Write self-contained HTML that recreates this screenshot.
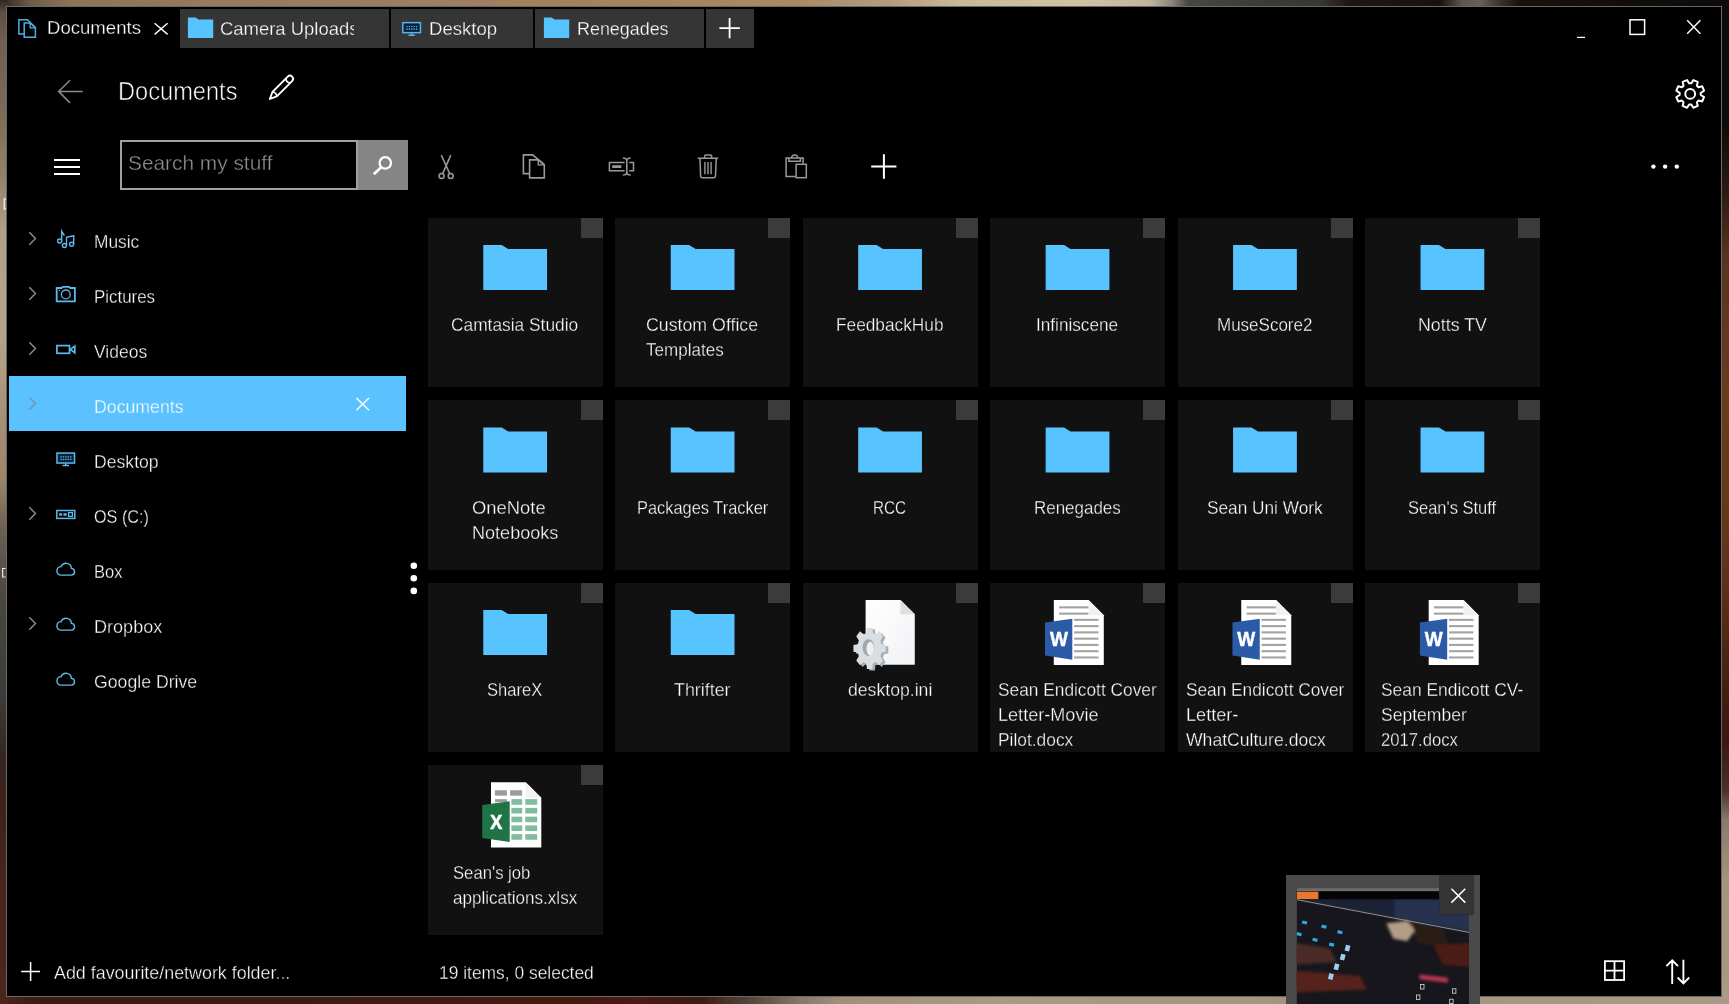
<!DOCTYPE html>
<html lang="en">
<head>
<meta charset="utf-8">
<title>Documents</title>
<style>
*{box-sizing:border-box;margin:0;padding:0}
html,body{width:1729px;height:1004px;overflow:hidden;background:#000}
body{position:relative;font-family:"Liberation Sans",sans-serif;color:#fff;-webkit-font-smoothing:antialiased}
.abs{position:absolute}
/* desktop photo peeking round the window */
#bgT{left:0;top:0;width:1729px;height:8px;background:linear-gradient(90deg,#2e2620 0,#4a3d32 14px,#6d5b49 30px,#8c7359 70px,#97795b 200px,#9c7f60 430px,#a3845f 640px,#a98a68 800px,#b39c7d 890px,#c9b999 960px,#d0c3a6 1080px,#c2b59b 1150px,#8a847c 1172px,#4a4644 1188px,#3e3a38 1260px,#3a3634 1320px,#1c1714 1350px,#171210 1440px,#5e554d 1462px,#6a6058 1480px,#3a322c 1500px,#17110e 1520px,#0d0a09 1729px)}
#bgB{left:0;top:996px;width:1729px;height:8px;background:linear-gradient(90deg,#4a261c 0,#3a1a12 40px,#3c1a12 300px,#42190f 560px,#4a1a14 640px,#3a1a14 700px,#54453c 750px,#86786a 800px,#a08f7c 840px,#a89a84 1000px,#a3947e 1300px,#a89a86 1729px)}
#bgL{left:0;top:0;width:8px;height:1004px;background:linear-gradient(180deg,#2e2620 0,#5a4e44 12px,#705f50 40px,#7d6c5a 120px,#94846e 180px,#b0a08a 230px,#b5a48c 330px,#a8947a 400px,#9a856b 480px,#6a5f54 530px,#4a4642 600px,#3c3a38 700px,#35241f 760px,#40221a 820px,#48261c 900px,#4a261c 1004px)}
#bgR{left:1721px;top:0;width:8px;height:1004px;background:linear-gradient(180deg,#0d0a09 0,#0d0a09 120px,#2a1a12 190px,#5a3420 260px,#6a3c1e 400px,#62351a 560px,#4a2412 660px,#3a1810 740px,#4a3028 790px,#8a7a6a 820px,#a39480 880px,#a89a86 1004px)}
.t{position:absolute;white-space:nowrap;line-height:1}
#win{left:6px;top:6px;width:1716px;height:991px;background:#000;border:1px solid #6b6862}
</style>
</head>
<body>
<div id="bgT" class="abs"></div>
<div id="bgB" class="abs"></div>
<div id="bgL" class="abs"></div>
<div id="bgR" class="abs"></div>
<div id="win" class="abs"></div>
<div class="abs" style="left:179.50px;top:9.40px;width:209.50px;height:38.20px;background:#353535;"></div>
<div class="abs" style="left:391.20px;top:9.40px;width:141.60px;height:38.20px;background:#353535;"></div>
<div class="abs" style="left:535.10px;top:9.40px;width:169.00px;height:38.20px;background:#353535;"></div>
<div class="abs" style="left:706.40px;top:9.40px;width:47.40px;height:38.20px;background:#353535;"></div>
<div class="abs" style="left:53.80px;top:158.70px;width:26.00px;height:2.00px;background:#fff;"></div><div class="abs" style="left:53.80px;top:165.80px;width:26.00px;height:2.00px;background:#fff;"></div><div class="abs" style="left:53.80px;top:173.00px;width:26.00px;height:2.00px;background:#fff;"></div>
<div class="abs" style="left:120.20px;top:140.20px;width:238.00px;height:49.60px;background:#000;border:2px solid #a0a0a0"></div>
<div class="abs" style="left:357.60px;top:140.20px;width:50.50px;height:49.60px;background:#858585;"></div>
<div class="abs" style="left:8.60px;top:376.20px;width:397.30px;height:54.40px;background:#5bc2ff;"></div>
<div class="abs" style="left:428.00px;top:217.75px;width:174.80px;height:169.60px;background:#111111;"></div>
<div class="abs" style="left:580.80px;top:217.75px;width:22.00px;height:20.20px;background:#3b3b3b;"></div>
<div class="abs" style="left:615.45px;top:217.75px;width:174.80px;height:169.60px;background:#111111;"></div>
<div class="abs" style="left:768.25px;top:217.75px;width:22.00px;height:20.20px;background:#3b3b3b;"></div>
<div class="abs" style="left:802.90px;top:217.75px;width:174.80px;height:169.60px;background:#111111;"></div>
<div class="abs" style="left:955.70px;top:217.75px;width:22.00px;height:20.20px;background:#3b3b3b;"></div>
<div class="abs" style="left:990.35px;top:217.75px;width:174.80px;height:169.60px;background:#111111;"></div>
<div class="abs" style="left:1143.15px;top:217.75px;width:22.00px;height:20.20px;background:#3b3b3b;"></div>
<div class="abs" style="left:1177.80px;top:217.75px;width:174.80px;height:169.60px;background:#111111;"></div>
<div class="abs" style="left:1330.60px;top:217.75px;width:22.00px;height:20.20px;background:#3b3b3b;"></div>
<div class="abs" style="left:1365.25px;top:217.75px;width:174.80px;height:169.60px;background:#111111;"></div>
<div class="abs" style="left:1518.05px;top:217.75px;width:22.00px;height:20.20px;background:#3b3b3b;"></div>
<div class="abs" style="left:428.00px;top:400.25px;width:174.80px;height:169.60px;background:#111111;"></div>
<div class="abs" style="left:580.80px;top:400.25px;width:22.00px;height:20.20px;background:#3b3b3b;"></div>
<div class="abs" style="left:615.45px;top:400.25px;width:174.80px;height:169.60px;background:#111111;"></div>
<div class="abs" style="left:768.25px;top:400.25px;width:22.00px;height:20.20px;background:#3b3b3b;"></div>
<div class="abs" style="left:802.90px;top:400.25px;width:174.80px;height:169.60px;background:#111111;"></div>
<div class="abs" style="left:955.70px;top:400.25px;width:22.00px;height:20.20px;background:#3b3b3b;"></div>
<div class="abs" style="left:990.35px;top:400.25px;width:174.80px;height:169.60px;background:#111111;"></div>
<div class="abs" style="left:1143.15px;top:400.25px;width:22.00px;height:20.20px;background:#3b3b3b;"></div>
<div class="abs" style="left:1177.80px;top:400.25px;width:174.80px;height:169.60px;background:#111111;"></div>
<div class="abs" style="left:1330.60px;top:400.25px;width:22.00px;height:20.20px;background:#3b3b3b;"></div>
<div class="abs" style="left:1365.25px;top:400.25px;width:174.80px;height:169.60px;background:#111111;"></div>
<div class="abs" style="left:1518.05px;top:400.25px;width:22.00px;height:20.20px;background:#3b3b3b;"></div>
<div class="abs" style="left:428.00px;top:582.75px;width:174.80px;height:169.60px;background:#111111;"></div>
<div class="abs" style="left:580.80px;top:582.75px;width:22.00px;height:20.20px;background:#3b3b3b;"></div>
<div class="abs" style="left:615.45px;top:582.75px;width:174.80px;height:169.60px;background:#111111;"></div>
<div class="abs" style="left:768.25px;top:582.75px;width:22.00px;height:20.20px;background:#3b3b3b;"></div>
<div class="abs" style="left:802.90px;top:582.75px;width:174.80px;height:169.60px;background:#111111;"></div>
<div class="abs" style="left:955.70px;top:582.75px;width:22.00px;height:20.20px;background:#3b3b3b;"></div>
<div class="abs" style="left:990.35px;top:582.75px;width:174.80px;height:169.60px;background:#111111;"></div>
<div class="abs" style="left:1143.15px;top:582.75px;width:22.00px;height:20.20px;background:#3b3b3b;"></div>
<div class="abs" style="left:1177.80px;top:582.75px;width:174.80px;height:169.60px;background:#111111;"></div>
<div class="abs" style="left:1330.60px;top:582.75px;width:22.00px;height:20.20px;background:#3b3b3b;"></div>
<div class="abs" style="left:1365.25px;top:582.75px;width:174.80px;height:169.60px;background:#111111;"></div>
<div class="abs" style="left:1518.05px;top:582.75px;width:22.00px;height:20.20px;background:#3b3b3b;"></div>
<div class="abs" style="left:428.00px;top:765.25px;width:174.80px;height:169.60px;background:#111111;"></div>
<div class="abs" style="left:580.80px;top:765.25px;width:22.00px;height:20.20px;background:#3b3b3b;"></div>
<div class="abs" style="left:1286.40px;top:875.00px;width:193.50px;height:129.00px;background:#4a4a4a;"></div>
<div class="abs" style="left:1439.20px;top:875.00px;width:35.20px;height:39.60px;background:#343434;"></div>
<svg class="abs" style="left:0;top:0;will-change:transform" width="1729" height="1004" viewBox="0 0 1729 1004">
<g fill="none" stroke="#4fb0e2" stroke-width="1.5"><path d="M24.2 33.9H18.9V19.7H27.4L35.4 27.6"/><path d="M24.2 22.9H30.2L35.4 27.8V37.3H24.2Z"/><path d="M30.2 22.9V27.8H35.4" stroke-width="1.3"/></g>
<path d="M154.6 23.2L167.6 34.4M167.6 23.2L154.6 34.4" stroke="#fff" stroke-width="1.4" fill="none"/>
<path d="M187.90 17.60h7.8l2.8 1.9h14.7v18.5h-25.3z" fill="#58c4ff"/>
<g fill="none" stroke="#55b4e8" stroke-width="1.5"><rect x="402.85" y="22.65" width="17.6" height="10" fill="#06213a"/><path d="M411.65 33.10v2M408.45 35.20h6.4"/><path d="M406.30 26.50h11" stroke-dasharray="1.4 1" stroke-width="1.2"/><path d="M406.30 29.00h11" stroke-dasharray="1.4 1" stroke-width="1.4"/></g>
<path d="M543.90 17.60h7.8l2.8 1.9h14.7v18.5h-25.3z" fill="#58c4ff"/>
<path d="M719.4 28.1H739.8M729.6 18V38.2" stroke="#fff" stroke-width="1.8" fill="none"/>
<path d="M1577 37.4H1585" stroke="#fff" stroke-width="1.3"/>
<rect x="1630" y="19.8" width="14.6" height="14.6" fill="none" stroke="#fff" stroke-width="1.5"/>
<path d="M1687.2 20.2L1700.4 33.8M1700.4 20.2L1687.2 33.8" stroke="#fff" stroke-width="1.4" fill="none"/>
<path d="M82.7 91.4H58.2M70 80.3L58.6 91.4L70 102.9" stroke="#8a8a8a" stroke-width="1.5" fill="none"/>
<g transform="translate(269.4,99.4) rotate(-45)" fill="none" stroke="#fff" stroke-width="1.9" stroke-linejoin="round"><path d="M0.6 0L7.4 -3.1H29A3.1 3.1 0 0 1 29 3.1H7.4Z"/><path d="M7.4 -3.1A5 5 0 0 1 7.4 3.1M26.3 -3.1A5 5 0 0 0 26.3 3.1" stroke-width="1.6"/></g>
<g fill="none" stroke="#fff" stroke-width="2" stroke-linejoin="round"><path d="M1700.36 90.86L1704.20 91.52L1704.20 96.28L1700.36 96.94L1699.53 98.93L1701.78 102.12L1698.42 105.48L1695.23 103.23L1693.24 104.06L1692.58 107.90L1687.82 107.90L1687.16 104.06L1685.17 103.23L1681.98 105.48L1678.62 102.12L1680.87 98.93L1680.04 96.94L1676.20 96.28L1676.20 91.52L1680.04 90.86L1680.87 88.87L1678.62 85.68L1681.98 82.32L1685.17 84.57L1687.16 83.74L1687.82 79.90L1692.58 79.90L1693.24 83.74L1695.23 84.57L1698.42 82.32L1701.78 85.68L1699.53 88.87Z" transform="rotate(22.5 1690.2 93.9)"/><circle cx="1690.2" cy="93.9" r="4.9"/></g>
<g fill="none" stroke="#fff" stroke-width="2.2"><circle cx="385.3" cy="162.9" r="5.7"/><path d="M381.2 167.2L373.8 174.3" stroke-width="2.6"/></g>
<g fill="none" stroke="#9a9a9a" stroke-width="1.5"><path d="M441.3 155.1L449.6 173.4M450.8 155.1L442.8 173.4"/><circle cx="441.6" cy="175.9" r="2.5"/><circle cx="450.7" cy="175.9" r="2.5"/></g>
<g fill="none" stroke="#9a9a9a" stroke-width="1.6"><path d="M529.6 173.6H523.4V154.9H532.6L544.3 164.6"/><path d="M529.6 159.9H538.3L544.3 164.9V177.9H529.6Z"/><path d="M538.3 159.9V164.9H544.3" stroke-width="1.4"/></g>
<g fill="none" stroke="#9a9a9a" stroke-width="1.5"><path d="M624.6 162.6H609.4V170.7H624.6M629.2 162.6H633.5V170.7H629.2"/><path d="M612.2 166.6H621.3" stroke-width="2.8"/><path d="M622.9 157.9C625.8 157.9 626.8 159 626.8 161V172C626.8 174 625.8 175.1 622.9 175.1M630.7 157.9C627.8 157.9 626.8 159 626.8 161M626.8 172C626.8 174 627.8 175.1 630.7 175.1"/></g>
<g fill="none" stroke="#9a9a9a" stroke-width="1.5"><path d="M697.8 158.2H718.1M704.6 158.2V156.4Q704.6 155 706 155H710.3Q711.7 155 711.7 156.4V158.2"/><path d="M700 158.2L700.6 176Q700.7 177.8 702.5 177.8H713.6Q715.4 177.8 715.5 176L716.3 158.2"/><path d="M704.9 162V174.2M708 162V174.2M711.1 162V174.2" stroke-width="1.4"/></g>
<g fill="none" stroke="#9a9a9a" stroke-width="1.5"><path d="M795.6 176.6H786.1V158H803.1V163.8"/><path d="M788.9 158V161.3H800.4V158M791.6 158A3.1 3.1 0 0 1 797.8 158"/><rect x="796.1" y="164.3" width="10.2" height="13.4"/></g>
<path d="M871.2 166.5H896.4M883.9 154.2V178.7" stroke="#fff" stroke-width="2" fill="none"/>
<g fill="#fff"><circle cx="1653.4" cy="166.6" r="2.2"/><circle cx="1665.1" cy="166.6" r="2.2"/><circle cx="1676.8" cy="166.6" r="2.2"/></g>
<path d="M29.3 232.30L35.5 238.50L29.3 244.70" stroke="#8f8f8f" stroke-width="1.4" fill="none"/>
<path d="M29.3 287.30L35.5 293.50L29.3 299.70" stroke="#8f8f8f" stroke-width="1.4" fill="none"/>
<path d="M29.3 342.30L35.5 348.50L29.3 354.70" stroke="#8f8f8f" stroke-width="1.4" fill="none"/>
<path d="M29.3 397.30L35.5 403.50L29.3 409.70" stroke="#6f93ad" stroke-width="1.4" fill="none"/>
<path d="M29.3 507.30L35.5 513.50L29.3 519.70" stroke="#8f8f8f" stroke-width="1.4" fill="none"/>
<path d="M29.3 617.30L35.5 623.50L29.3 629.70" stroke="#8f8f8f" stroke-width="1.4" fill="none"/>
<g fill="none" stroke="#5db9ea" stroke-width="1.4"><circle cx="59.6" cy="241" r="2"/><path d="M61.7 241V231.3L64.4 235.6"/><circle cx="64.4" cy="245.5" r="2"/><circle cx="71.6" cy="244.2" r="2"/><path d="M66.5 245.5V237.3L73.7 235.7V244.2"/></g>
<g fill="none" stroke="#5db9ea"><path d="M56.7 288H61.6L62.9 286.8H69L70.3 288H74.9V301.4H56.7Z" stroke-width="1.8"/><circle cx="65.8" cy="294.4" r="4.4" stroke-width="1.3"/><rect x="58.8" y="290" width="1.2" height="1" fill="#5db9ea" stroke="none"/></g>
<g fill="none" stroke="#5db9ea" stroke-width="1.7"><rect x="56.9" y="345.6" width="12.6" height="7.7"/><path d="M70.4 349.4L74.8 346.1V352.8Z"/></g>
<g fill="none" stroke="#5db9ea" stroke-width="1.5"><rect x="56.95" y="453.05" width="17.6" height="10" fill="#06213a"/><path d="M65.75 463.50v2M62.55 465.60h6.4"/><path d="M60.40 456.90h11" stroke-dasharray="1.4 1" stroke-width="1.2"/><path d="M60.40 459.40h11" stroke-dasharray="1.4 1" stroke-width="1.4"/></g>
<g fill="none" stroke="#5db9ea" stroke-width="1.5"><rect x="56.8" y="510.5" width="18" height="7.9"/><rect x="68.6" y="512.6" width="3.8" height="3.8" stroke-width="1.3"/></g><path d="M59.2 514.5h2.9m1.3 0h3.2" stroke="#5db9ea" stroke-width="2.4"/>
<path transform="translate(0 0.00)" d="M60.3 575.1A4.3 4.3 0 0 1 61.2 566.6A5.3 5.3 0 0 1 71.4 568.4A3.4 3.4 0 0 1 71.9 575.1Z" fill="none" stroke="#5db9ea" stroke-width="1.4"/>
<path transform="translate(0 55.00)" d="M60.3 575.1A4.3 4.3 0 0 1 61.2 566.6A5.3 5.3 0 0 1 71.4 568.4A3.4 3.4 0 0 1 71.9 575.1Z" fill="none" stroke="#5db9ea" stroke-width="1.4"/>
<path transform="translate(0 110.00)" d="M60.3 575.1A4.3 4.3 0 0 1 61.2 566.6A5.3 5.3 0 0 1 71.4 568.4A3.4 3.4 0 0 1 71.9 575.1Z" fill="none" stroke="#5db9ea" stroke-width="1.4"/>
<path d="M356.4 397.9L369 410.2M369 397.9L356.4 410.2" stroke="#fff" stroke-width="1.4" fill="none"/>
<g fill="#fff"><circle cx="413.8" cy="565.8" r="3.3"/><circle cx="413.8" cy="578.3" r="3.3"/><circle cx="413.8" cy="590.9" r="3.3"/></g>
<path d="M483.30 245.05h18.4l6.5 3.9h38.85v41.1h-63.75z" fill="#58c4ff"/>
<path d="M670.75 245.05h18.4l6.5 3.9h38.85v41.1h-63.75z" fill="#58c4ff"/>
<path d="M858.20 245.05h18.4l6.5 3.9h38.85v41.1h-63.75z" fill="#58c4ff"/>
<path d="M1045.65 245.05h18.4l6.5 3.9h38.85v41.1h-63.75z" fill="#58c4ff"/>
<path d="M1233.10 245.05h18.4l6.5 3.9h38.85v41.1h-63.75z" fill="#58c4ff"/>
<path d="M1420.55 245.05h18.4l6.5 3.9h38.85v41.1h-63.75z" fill="#58c4ff"/>
<path d="M483.30 427.55h18.4l6.5 3.9h38.85v41.1h-63.75z" fill="#58c4ff"/>
<path d="M670.75 427.55h18.4l6.5 3.9h38.85v41.1h-63.75z" fill="#58c4ff"/>
<path d="M858.20 427.55h18.4l6.5 3.9h38.85v41.1h-63.75z" fill="#58c4ff"/>
<path d="M1045.65 427.55h18.4l6.5 3.9h38.85v41.1h-63.75z" fill="#58c4ff"/>
<path d="M1233.10 427.55h18.4l6.5 3.9h38.85v41.1h-63.75z" fill="#58c4ff"/>
<path d="M1420.55 427.55h18.4l6.5 3.9h38.85v41.1h-63.75z" fill="#58c4ff"/>
<path d="M483.30 610.05h18.4l6.5 3.9h38.85v41.1h-63.75z" fill="#58c4ff"/>
<path d="M670.75 610.05h18.4l6.5 3.9h38.85v41.1h-63.75z" fill="#58c4ff"/>
<defs><linearGradient id="pg" x1="0" y1="0" x2="1" y2="1"><stop offset="0" stop-color="#ffffff"/><stop offset="1" stop-color="#f1f2f4"/></linearGradient></defs><path d="M865.60 599.95h34.90l14.30 14.30v50.60h-49.20z" fill="url(#pg)"/><path d="M900.50 599.95v14.30h14.30z" fill="#dedede"/><g transform="translate(869.60 648.35) scale(0.8 1.02)"><path d="M14.95 -4.09L20.22 -3.37L20.22 3.37L14.95 4.09L13.46 7.68L16.68 11.92L11.92 16.68L7.68 13.46L4.09 14.95L3.37 20.22L-3.37 20.22L-4.09 14.95L-7.68 13.46L-11.92 16.68L-16.68 11.92L-13.46 7.68L-14.95 4.09L-20.22 3.37L-20.22 -3.37L-14.95 -4.09L-13.46 -7.68L-16.68 -11.92L-11.92 -16.68L-7.68 -13.46L-4.09 -14.95L-3.37 -20.22L3.37 -20.22L4.09 -14.95L7.68 -13.46L11.92 -16.68L16.68 -11.92L13.46 -7.68Z" fill="#a9b0b7" transform="translate(3.2 1.6)"/><path d="M14.95 -4.09L20.22 -3.37L20.22 3.37L14.95 4.09L13.46 7.68L16.68 11.92L11.92 16.68L7.68 13.46L4.09 14.95L3.37 20.22L-3.37 20.22L-4.09 14.95L-7.68 13.46L-11.92 16.68L-16.68 11.92L-13.46 7.68L-14.95 4.09L-20.22 3.37L-20.22 -3.37L-14.95 -4.09L-13.46 -7.68L-16.68 -11.92L-11.92 -16.68L-7.68 -13.46L-4.09 -14.95L-3.37 -20.22L3.37 -20.22L4.09 -14.95L7.68 -13.46L11.92 -16.68L16.68 -11.92L13.46 -7.68Z" fill="#d9dee3"/><ellipse cx="-1.5" cy="-0.8" rx="7.3" ry="8.2" fill="#a2a8ae"/><ellipse cx="0.8" cy="0.3" rx="4.6" ry="6.8" fill="#eef0f2"/></g>
<path d="M1053.80 599.95h34.80l15.20 15.20v49.80h-50.00z" fill="#ffffff"/><path d="M1088.60 599.95v15.20h15.20z" fill="#f1f1f1"/><rect x="1059.10" y="606.30" width="29.3" height="2.1" fill="#a3a3a3"/><rect x="1059.10" y="612.60" width="29.3" height="2.1" fill="#a3a3a3"/><rect x="1074.10" y="618.80" width="24.4" height="2.1" fill="#a3a3a3"/><rect x="1074.10" y="625.07" width="24.4" height="2.1" fill="#a3a3a3"/><rect x="1074.10" y="631.34" width="24.4" height="2.1" fill="#a3a3a3"/><rect x="1074.10" y="637.61" width="24.4" height="2.1" fill="#a3a3a3"/><rect x="1074.10" y="643.88" width="24.4" height="2.1" fill="#a3a3a3"/><rect x="1074.10" y="650.15" width="24.4" height="2.1" fill="#a3a3a3"/><rect x="1074.10" y="656.42" width="24.4" height="2.1" fill="#a3a3a3"/><path d="M1045.00 622.55L1072.30 618.75V659.85L1045.00 655.55Z" fill="#2b5aa6"/><text x="1058.90" y="645.85" font-family="Liberation Sans, sans-serif" font-weight="bold" font-size="19.6" fill="#fff" stroke="#fff" stroke-width="0.4" text-anchor="middle" textLength="18" lengthAdjust="spacingAndGlyphs">W</text>
<path d="M1241.25 599.95h34.80l15.20 15.20v49.80h-50.00z" fill="#ffffff"/><path d="M1276.05 599.95v15.20h15.20z" fill="#f1f1f1"/><rect x="1246.55" y="606.30" width="29.3" height="2.1" fill="#a3a3a3"/><rect x="1246.55" y="612.60" width="29.3" height="2.1" fill="#a3a3a3"/><rect x="1261.55" y="618.80" width="24.4" height="2.1" fill="#a3a3a3"/><rect x="1261.55" y="625.07" width="24.4" height="2.1" fill="#a3a3a3"/><rect x="1261.55" y="631.34" width="24.4" height="2.1" fill="#a3a3a3"/><rect x="1261.55" y="637.61" width="24.4" height="2.1" fill="#a3a3a3"/><rect x="1261.55" y="643.88" width="24.4" height="2.1" fill="#a3a3a3"/><rect x="1261.55" y="650.15" width="24.4" height="2.1" fill="#a3a3a3"/><rect x="1261.55" y="656.42" width="24.4" height="2.1" fill="#a3a3a3"/><path d="M1232.45 622.55L1259.75 618.75V659.85L1232.45 655.55Z" fill="#2b5aa6"/><text x="1246.35" y="645.85" font-family="Liberation Sans, sans-serif" font-weight="bold" font-size="19.6" fill="#fff" stroke="#fff" stroke-width="0.4" text-anchor="middle" textLength="18" lengthAdjust="spacingAndGlyphs">W</text>
<path d="M1428.70 599.95h34.80l15.20 15.20v49.80h-50.00z" fill="#ffffff"/><path d="M1463.50 599.95v15.20h15.20z" fill="#f1f1f1"/><rect x="1434.00" y="606.30" width="29.3" height="2.1" fill="#a3a3a3"/><rect x="1434.00" y="612.60" width="29.3" height="2.1" fill="#a3a3a3"/><rect x="1449.00" y="618.80" width="24.4" height="2.1" fill="#a3a3a3"/><rect x="1449.00" y="625.07" width="24.4" height="2.1" fill="#a3a3a3"/><rect x="1449.00" y="631.34" width="24.4" height="2.1" fill="#a3a3a3"/><rect x="1449.00" y="637.61" width="24.4" height="2.1" fill="#a3a3a3"/><rect x="1449.00" y="643.88" width="24.4" height="2.1" fill="#a3a3a3"/><rect x="1449.00" y="650.15" width="24.4" height="2.1" fill="#a3a3a3"/><rect x="1449.00" y="656.42" width="24.4" height="2.1" fill="#a3a3a3"/><path d="M1419.90 622.55L1447.20 618.75V659.85L1419.90 655.55Z" fill="#2b5aa6"/><text x="1433.80" y="645.85" font-family="Liberation Sans, sans-serif" font-weight="bold" font-size="19.6" fill="#fff" stroke="#fff" stroke-width="0.4" text-anchor="middle" textLength="18" lengthAdjust="spacingAndGlyphs">W</text>
<path d="M491.00 782.25h34.70l15.60 15.60v49.60h-50.30z" fill="#ffffff"/><path d="M525.70 782.25v15.60h15.60z" fill="#f3f3f3"/><rect x="495.00" y="790.25" width="11.9" height="5.4" fill="#9b9b9b"/><rect x="510.10" y="790.25" width="12" height="5.4" fill="#9b9b9b"/><rect x="495.00" y="799.15" width="11.9" height="3" fill="#9b9b9b"/><rect x="511.40" y="799.15" width="10.8" height="5.6" fill="#7fbd9e"/><rect x="525.30" y="799.15" width="11.9" height="5.6" fill="#7fbd9e"/><rect x="511.40" y="807.90" width="10.8" height="5.6" fill="#7fbd9e"/><rect x="525.30" y="807.90" width="11.9" height="5.6" fill="#7fbd9e"/><rect x="511.40" y="816.65" width="10.8" height="5.6" fill="#7fbd9e"/><rect x="525.30" y="816.65" width="11.9" height="5.6" fill="#7fbd9e"/><rect x="511.40" y="825.40" width="10.8" height="5.6" fill="#7fbd9e"/><rect x="525.30" y="825.40" width="11.9" height="5.6" fill="#7fbd9e"/><rect x="511.40" y="834.15" width="10.8" height="5.6" fill="#7fbd9e"/><rect x="525.30" y="834.15" width="11.9" height="5.6" fill="#7fbd9e"/><path d="M482.20 805.05L509.70 801.25V841.95L482.20 838.05Z" fill="#1f7446"/><text x="496.20" y="828.75" font-family="Liberation Sans, sans-serif" font-weight="bold" font-size="19.8" fill="#fff" stroke="#fff" stroke-width="0.7" text-anchor="middle" textLength="12" lengthAdjust="spacingAndGlyphs">X</text>
<path d="M21.2 971.5H40M30.6 962.1V980.9" stroke="#fff" stroke-width="1.5" fill="none"/>
<g fill="none" stroke="#fff" stroke-width="1.8"><rect x="1604.9" y="961.2" width="19.2" height="18.8"/><path d="M1614.5 961.2V980M1604.9 970.6H1624.1"/></g>
<g fill="none" stroke="#fff" stroke-width="1.9"><path d="M1672.2 984V960.6M1666.4 966.2L1672.2 960.4L1678 966.2"/><path d="M1683.4 959.7V983.2M1677.6 977.5L1683.4 983.3L1689.2 977.5"/></g>
<defs><clipPath id="phc"><path d="M1296.6 887.2H1439.2V914.6H1469V1004H1296.6Z"/></clipPath><filter id="b1" x="-20%" y="-20%" width="140%" height="140%"><feGaussianBlur stdDeviation="1.6"/></filter><filter id="b2"><feGaussianBlur stdDeviation="0.5"/></filter><linearGradient id="tg" x1="0" y1="0" x2="0" y2="1"><stop offset="0" stop-color="#5a5a5a"/><stop offset="1" stop-color="#777"/></linearGradient></defs><g clip-path="url(#phc)"><rect x="1296.6" y="887.2" width="172.4" height="116.8" fill="#16161c"/><g filter="url(#b1)"><polygon points="1290.8,898.9 1477.7,898.9 1477.7,934.2 1469.0,932.2" fill="#283050" /><polygon points="1290.8,898.9 1394.6,898.9 1394.6,917.6" fill="#1b2036" /><polygon points="1290.8,942.5 1329.5,948.1 1336.5,961.9 1290.8,964.7" fill="#4a2c28" /><polygon points="1290.8,970.2 1360.0,975.8 1366.9,989.6 1290.8,992.4" fill="#55201a" /><polygon points="1386.3,923.2 1407.1,921.1 1415.4,930.1 1407.1,941.2 1393.2,938.4" fill="#b59c86" /><polygon points="1408.5,920.4 1443.1,930.1 1450.0,948.1 1416.8,942.5 1414.0,930.1" fill="#2a1c18" /><polygon points="1433.4,945.3 1477.7,942.5 1477.7,967.5 1443.1,964.7" fill="#4a1c16" /><polygon points="1419.5,974.4 1447.9,977.8 1447.9,982.7 1419.5,979.2" fill="#c03655" /></g><g filter="url(#b2)"><path d="M1296.6 899.6L1469.0 932.4" stroke="#8f927f" stroke-width="1"/><rect x="1302.1" y="920.9" width="5" height="3.2" fill="#2fa6df" transform="rotate(12 1304.6 922.5)"/><rect x="1321.5" y="925.0" width="5" height="3.2" fill="#2fa6df" transform="rotate(12 1324.0 926.6)"/><rect x="1337.4" y="930.6" width="5" height="3.2" fill="#2fa6df" transform="rotate(12 1339.9 932.2)"/><rect x="1296.6" y="932.6" width="5" height="3.2" fill="#2fa6df" transform="rotate(12 1299.1 934.2)"/><rect x="1312.5" y="938.2" width="5" height="3.2" fill="#2fa6df" transform="rotate(12 1315.0 939.8)"/><rect x="1329.1" y="943.0" width="5" height="3.2" fill="#2fa6df" transform="rotate(12 1331.6 944.6)"/><rect x="1345.2" y="945.1" width="4.6" height="6" fill="#9fcdf0" transform="rotate(14 1347.5 948.1)"/><rect x="1340.4" y="954.1" width="4.6" height="6" fill="#9fcdf0" transform="rotate(14 1342.7 957.1)"/><rect x="1334.2" y="963.8" width="4.6" height="6" fill="#9fcdf0" transform="rotate(14 1336.5 966.8)"/><rect x="1328.6" y="973.5" width="4.6" height="6" fill="#9fcdf0" transform="rotate(14 1330.9 976.5)"/><rect x="1420.6" y="984.6" width="3.4" height="4.4" fill="none" stroke="#ddd" stroke-width="0.8"/><rect x="1452.5" y="988.8" width="3.4" height="4.4" fill="none" stroke="#ddd" stroke-width="0.8"/><rect x="1416.5" y="995.0" width="3.4" height="4.4" fill="none" stroke="#ddd" stroke-width="0.8"/><rect x="1449.7" y="999.2" width="3.4" height="4.4" fill="none" stroke="#ddd" stroke-width="0.8"/></g><rect x="1296.6" y="887.2" width="172.4" height="4.2" fill="url(#tg)"/><rect x="1296.6" y="891.3" width="142.6" height="7.8" fill="#050505"/><rect x="1296.8" y="891.7" width="21.6" height="7.4" fill="#e9772d"/></g>
<path d="M1451.4 888.7L1465.3 902.6M1465.3 888.7L1451.4 902.6" stroke="#fff" stroke-width="1.5" fill="none"/>
<path d="M6 199H4.3V209H6" fill="none" stroke="#e8e8e8" stroke-width="1.4"/><path d="M5.6 568.5H2.6V577H5.6" fill="none" stroke="#e8e8e8" stroke-width="1.2"/>
</svg>
<div class="abs" style="left:0;top:0;width:1729px;height:1004px;will-change:transform">
<span class="t " style="left:46.80px;top:19.46px;font-size:18.60px;color:#fff;-webkit-text-stroke:0.30px #000;transform:scaleX(0.9992);transform-origin:0 0;">Documents</span>
<div class="abs" style="left:215px;top:12px;width:138.8px;height:34px;overflow:hidden"><span class="t " style="left:5.40px;top:8.36px;font-size:18.60px;color:#fff;-webkit-text-stroke:0.30px #353535;transform:scaleX(0.9924);transform-origin:0 0;">Camera Uploads</span></div>
<span class="t " style="left:429.40px;top:20.36px;font-size:18.60px;color:#fff;-webkit-text-stroke:0.30px #353535;transform:scaleX(0.9980);transform-origin:0 0;">Desktop</span>
<span class="t " style="left:576.50px;top:20.36px;font-size:18.60px;color:#fff;-webkit-text-stroke:0.30px #353535;transform:scaleX(0.9628);transform-origin:0 0;">Renegades</span>
<span class="t " style="left:118.40px;top:79.07px;font-size:25.20px;color:#fff;-webkit-text-stroke:0.60px #000;transform:scaleX(0.9376);transform-origin:0 0;">Documents</span>
<span class="t " style="left:127.50px;top:152.93px;font-size:20.40px;color:#909090;-webkit-text-stroke:0.35px #000;transform:scaleX(1.0223);transform-origin:0 0;">Search my stuff</span>
<span class="t " style="left:93.50px;top:232.69px;font-size:18.20px;color:#fff;-webkit-text-stroke:0.33px #000;transform:scaleX(0.9532);transform-origin:0 0;">Music</span>
<span class="t " style="left:93.50px;top:287.69px;font-size:18.20px;color:#fff;-webkit-text-stroke:0.33px #000;transform:scaleX(0.9294);transform-origin:0 0;">Pictures</span>
<span class="t " style="left:93.50px;top:342.69px;font-size:18.20px;color:#fff;-webkit-text-stroke:0.33px #000;transform:scaleX(0.9617);transform-origin:0 0;">Videos</span>
<span class="t " style="left:93.50px;top:397.69px;font-size:18.20px;color:#fff;-webkit-text-stroke:0.33px #5bc2ff;transform:scaleX(0.9734);transform-origin:0 0;">Documents</span>
<span class="t " style="left:93.50px;top:452.69px;font-size:18.20px;color:#fff;-webkit-text-stroke:0.33px #000;transform:scaleX(0.9691);transform-origin:0 0;">Desktop</span>
<span class="t " style="left:93.50px;top:507.69px;font-size:18.20px;color:#fff;-webkit-text-stroke:0.33px #000;transform:scaleX(0.8918);transform-origin:0 0;">OS (C:)</span>
<span class="t " style="left:93.50px;top:562.69px;font-size:18.20px;color:#fff;-webkit-text-stroke:0.33px #000;transform:scaleX(0.9088);transform-origin:0 0;">Box</span>
<span class="t " style="left:93.50px;top:617.69px;font-size:18.20px;color:#fff;-webkit-text-stroke:0.33px #000;transform:scaleX(0.9928);transform-origin:0 0;">Dropbox</span>
<span class="t " style="left:93.50px;top:672.69px;font-size:18.20px;color:#fff;-webkit-text-stroke:0.33px #000;transform:scaleX(0.9716);transform-origin:0 0;">Google Drive</span>
<span class="t " style="left:451.40px;top:316.24px;font-size:18.20px;color:#fff;-webkit-text-stroke:0.33px #111111;transform:scaleX(0.9533);transform-origin:0 0;">Camtasia Studio</span>
<span class="t " style="left:646.40px;top:316.24px;font-size:18.20px;color:#fff;-webkit-text-stroke:0.33px #111111;transform:scaleX(0.9759);transform-origin:0 0;">Custom Office</span>
<span class="t " style="left:646.40px;top:341.14px;font-size:18.20px;color:#fff;-webkit-text-stroke:0.33px #111111;transform:scaleX(0.9367);transform-origin:0 0;">Templates</span>
<span class="t " style="left:836.15px;top:316.24px;font-size:18.20px;color:#fff;-webkit-text-stroke:0.33px #111111;transform:scaleX(0.9496);transform-origin:0 0;">FeedbackHub</span>
<span class="t " style="left:1036.35px;top:316.24px;font-size:18.20px;color:#fff;-webkit-text-stroke:0.33px #111111;transform:scaleX(0.9436);transform-origin:0 0;">Infiniscene</span>
<span class="t " style="left:1217.10px;top:316.24px;font-size:18.20px;color:#fff;-webkit-text-stroke:0.33px #111111;transform:scaleX(0.9347);transform-origin:0 0;">MuseScore2</span>
<span class="t " style="left:1417.80px;top:316.24px;font-size:18.20px;color:#fff;-webkit-text-stroke:0.33px #111111;transform:scaleX(0.9792);transform-origin:0 0;">Notts TV</span>
<span class="t " style="left:471.85px;top:498.74px;font-size:18.20px;color:#fff;-webkit-text-stroke:0.33px #111111;transform:scaleX(1.0117);transform-origin:0 0;">OneNote</span>
<span class="t " style="left:471.85px;top:523.64px;font-size:18.20px;color:#fff;-webkit-text-stroke:0.33px #111111;transform:scaleX(0.9930);transform-origin:0 0;">Notebooks</span>
<span class="t " style="left:636.80px;top:498.74px;font-size:18.20px;color:#fff;-webkit-text-stroke:0.33px #111111;transform:scaleX(0.9021);transform-origin:0 0;">Packages Tracker</span>
<span class="t " style="left:873.40px;top:498.74px;font-size:18.20px;color:#fff;-webkit-text-stroke:0.33px #111111;transform:scaleX(0.8395);transform-origin:0 0;">RCC</span>
<span class="t " style="left:1034.00px;top:498.74px;font-size:18.20px;color:#fff;-webkit-text-stroke:0.33px #111111;transform:scaleX(0.9324);transform-origin:0 0;">Renegades</span>
<span class="t " style="left:1207.00px;top:498.74px;font-size:18.20px;color:#fff;-webkit-text-stroke:0.33px #111111;transform:scaleX(0.9479);transform-origin:0 0;">Sean Uni Work</span>
<span class="t " style="left:1408.25px;top:498.74px;font-size:18.20px;color:#fff;-webkit-text-stroke:0.33px #111111;transform:scaleX(0.9060);transform-origin:0 0;">Sean's Stuff</span>
<span class="t " style="left:487.45px;top:681.24px;font-size:18.20px;color:#fff;-webkit-text-stroke:0.33px #111111;transform:scaleX(0.9093);transform-origin:0 0;">ShareX</span>
<span class="t " style="left:674.20px;top:681.24px;font-size:18.20px;color:#fff;-webkit-text-stroke:0.33px #111111;transform:scaleX(0.9820);transform-origin:0 0;">Thrifter</span>
<span class="t " style="left:847.75px;top:681.24px;font-size:18.20px;color:#fff;-webkit-text-stroke:0.33px #111111;transform:scaleX(0.9700);transform-origin:0 0;">desktop.ini</span>
<span class="t " style="left:998.00px;top:681.24px;font-size:18.20px;color:#fff;-webkit-text-stroke:0.33px #111111;transform:scaleX(0.9513);transform-origin:0 0;">Sean Endicott Cover</span>
<span class="t " style="left:998.00px;top:706.14px;font-size:18.20px;color:#fff;-webkit-text-stroke:0.33px #111111;transform:scaleX(0.9946);transform-origin:0 0;">Letter-Movie</span>
<span class="t " style="left:998.00px;top:731.04px;font-size:18.20px;color:#fff;-webkit-text-stroke:0.33px #111111;transform:scaleX(0.9543);transform-origin:0 0;">Pilot.docx</span>
<span class="t " style="left:1185.65px;top:681.24px;font-size:18.20px;color:#fff;-webkit-text-stroke:0.33px #111111;transform:scaleX(0.9489);transform-origin:0 0;">Sean Endicott Cover</span>
<span class="t " style="left:1185.65px;top:706.14px;font-size:18.20px;color:#fff;-webkit-text-stroke:0.33px #111111;transform:scaleX(0.9962);transform-origin:0 0;">Letter-</span>
<span class="t " style="left:1185.65px;top:731.04px;font-size:18.20px;color:#fff;-webkit-text-stroke:0.33px #111111;transform:scaleX(0.9672);transform-origin:0 0;">WhatCulture.docx</span>
<span class="t " style="left:1381.15px;top:681.24px;font-size:18.20px;color:#fff;-webkit-text-stroke:0.33px #111111;transform:scaleX(0.9568);transform-origin:0 0;">Sean Endicott CV-</span>
<span class="t " style="left:1381.15px;top:706.14px;font-size:18.20px;color:#fff;-webkit-text-stroke:0.33px #111111;transform:scaleX(0.9649);transform-origin:0 0;">September</span>
<span class="t " style="left:1381.15px;top:731.04px;font-size:18.20px;color:#fff;-webkit-text-stroke:0.33px #111111;transform:scaleX(0.9156);transform-origin:0 0;">2017.docx</span>
<span class="t " style="left:452.90px;top:863.74px;font-size:18.20px;color:#fff;-webkit-text-stroke:0.33px #111111;transform:scaleX(0.9168);transform-origin:0 0;">Sean's job</span>
<span class="t " style="left:452.90px;top:888.64px;font-size:18.20px;color:#fff;-webkit-text-stroke:0.33px #111111;transform:scaleX(0.9380);transform-origin:0 0;">applications.xlsx</span>
<span class="t " style="left:54.10px;top:963.79px;font-size:18.20px;color:#fff;-webkit-text-stroke:0.33px #000;transform:scaleX(0.9822);transform-origin:0 0;">Add favourite/network folder...</span>
<span class="t " style="left:439.20px;top:963.79px;font-size:18.20px;color:#fff;-webkit-text-stroke:0.33px #000;transform:scaleX(0.9570);transform-origin:0 0;">19 items, 0 selected</span>
</div>

</body>
</html>
